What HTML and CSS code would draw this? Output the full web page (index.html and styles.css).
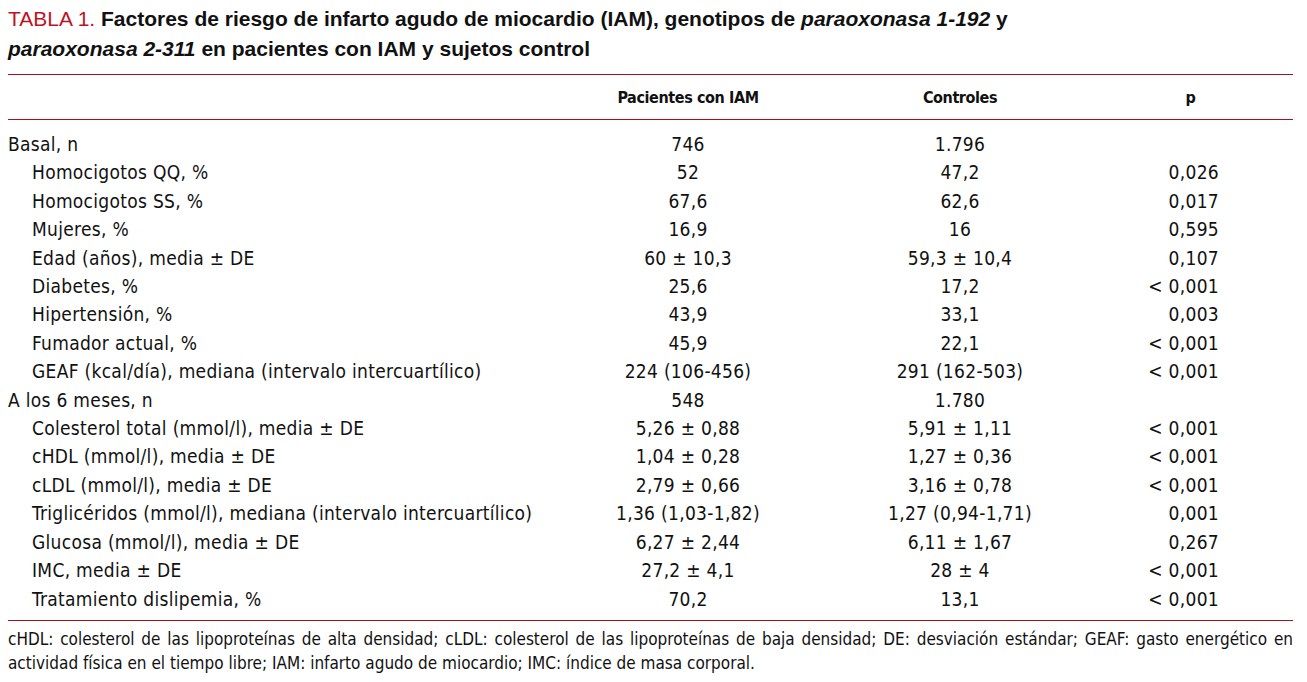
FILE: index.html
```html
<!DOCTYPE html>
<html lang="es">
<head>
<meta charset="utf-8">
<link rel="stylesheet" href="styles.css">
</head>
<body>
<div class="page">
  <h1 class="title"><span class="label">TABLA 1.</span> Factores de riesgo de infarto agudo de miocardio (IAM), genotipos de <i>paraoxonasa 1-192</i> y<br><i>paraoxonasa 2-311</i> en pacientes con IAM y sujetos control</h1>
  <table class="data">
    <thead>
      <tr><th class="c-label"></th><th class="c-num">Pacientes con IAM</th><th class="c-num">Controles</th><th class="c-p">p</th></tr>
    </thead>
    <tbody>
      <tr class="first"><td>Basal, n</td><td class="num">746</td><td class="num">1.796</td><td class="pv"></td></tr>
      <tr><td class="sub">Homocigotos QQ, %</td><td class="num">52</td><td class="num">47,2</td><td class="pv">0,026</td></tr>
      <tr><td class="sub">Homocigotos SS, %</td><td class="num">67,6</td><td class="num">62,6</td><td class="pv">0,017</td></tr>
      <tr><td class="sub">Mujeres, %</td><td class="num">16,9</td><td class="num">16</td><td class="pv">0,595</td></tr>
      <tr><td class="sub">Edad (años), media ± DE</td><td class="num">60 ± 10,3</td><td class="num">59,3 ± 10,4</td><td class="pv">0,107</td></tr>
      <tr><td class="sub">Diabetes, %</td><td class="num">25,6</td><td class="num">17,2</td><td class="pv">&lt; 0,001</td></tr>
      <tr><td class="sub">Hipertensión, %</td><td class="num">43,9</td><td class="num">33,1</td><td class="pv">0,003</td></tr>
      <tr><td class="sub">Fumador actual, %</td><td class="num">45,9</td><td class="num">22,1</td><td class="pv">&lt; 0,001</td></tr>
      <tr><td class="sub">GEAF (kcal/día), mediana (intervalo intercuartílico)</td><td class="num">224 (106-456)</td><td class="num">291 (162-503)</td><td class="pv">&lt; 0,001</td></tr>
      <tr><td>A los 6 meses, n</td><td class="num">548</td><td class="num">1.780</td><td class="pv"></td></tr>
      <tr><td class="sub">Colesterol total (mmol/l), media ± DE</td><td class="num">5,26 ± 0,88</td><td class="num">5,91 ± 1,11</td><td class="pv">&lt; 0,001</td></tr>
      <tr><td class="sub">cHDL (mmol/l), media ± DE</td><td class="num">1,04 ± 0,28</td><td class="num">1,27 ± 0,36</td><td class="pv">&lt; 0,001</td></tr>
      <tr><td class="sub">cLDL (mmol/l), media ± DE</td><td class="num">2,79 ± 0,66</td><td class="num">3,16 ± 0,78</td><td class="pv">&lt; 0,001</td></tr>
      <tr><td class="sub">Triglicéridos (mmol/l), mediana (intervalo intercuartílico)</td><td class="num">1,36 (1,03-1,82)</td><td class="num">1,27 (0,94-1,71)</td><td class="pv">0,001</td></tr>
      <tr><td class="sub">Glucosa (mmol/l), media ± DE</td><td class="num">6,27 ± 2,44</td><td class="num">6,11 ± 1,67</td><td class="pv">0,267</td></tr>
      <tr><td class="sub">IMC, media ± DE</td><td class="num">27,2 ± 4,1</td><td class="num">28 ± 4</td><td class="pv">&lt; 0,001</td></tr>
      <tr class="last"><td class="sub">Tratamiento dislipemia, %</td><td class="num">70,2</td><td class="num">13,1</td><td class="pv">&lt; 0,001</td></tr>
    </tbody>
  </table>
  <p class="note">cHDL: colesterol de las lipoproteínas de alta densidad; cLDL: colesterol de las lipoproteínas de baja densidad; DE: desviación estándar; GEAF: gasto energético en actividad física en el tiempo libre; IAM: infarto agudo de miocardio; IMC: índice de masa corporal.</p>
</div>
</body>
</html>
```

FILE: styles.css
```css
html, body {
  margin: 0;
  padding: 0;
  background: #ffffff;
}
body {
  color: #111111;
  font-family: "DejaVu Sans Condensed", "DejaVu Sans", sans-serif;
  font-stretch: condensed;
}
.page {
  width: 1285px;
  padding: 0 0 0 8px;
}
.title {
  margin: 4px 0 0 0;
  font-family: "Liberation Sans", Arial, sans-serif;
  font-stretch: normal;
  font-size: 21px;
  font-weight: bold;
  line-height: 30px;
  color: #111111;
}
.title .label {
  color: #c0121f;
  font-weight: normal;
}
.data {
  width: 1285px;
  margin-top: 10px;
  border-collapse: collapse;
  table-layout: fixed;
  border-top: 1px solid #a8101c;
  border-bottom: 1px solid #a8101c;
}
.c-label { width: 544px; }
.c-num { width: 272px; }
.c-p { width: 189px; }
thead th {
  height: 44px;
  padding: 0;
  font-size: 16px;
  font-weight: bold;
  letter-spacing: -0.4px;
  text-align: center;
  border-bottom: 1px solid #a8101c;
  vertical-align: middle;
}
thead th.c-p { padding-right: 8px; }
tbody td {
  height: 28.4px;
  padding: 0;
  font-size: 19px;
  letter-spacing: 0.3px;
  line-height: 28.4px;
  white-space: nowrap;
}
tbody tr.first td { padding-top: 10px; }
tbody tr.last td { padding-bottom: 7px; }
td.sub { padding-left: 24px; }
td.num { text-align: center; }
td.pv { text-align: right; padding-right: 74px; }
.note {
  width: 1285px;
  margin: 6px 0 0 0;
  font-size: 17px;
  line-height: 24px;
  text-align: justify;
}
```
